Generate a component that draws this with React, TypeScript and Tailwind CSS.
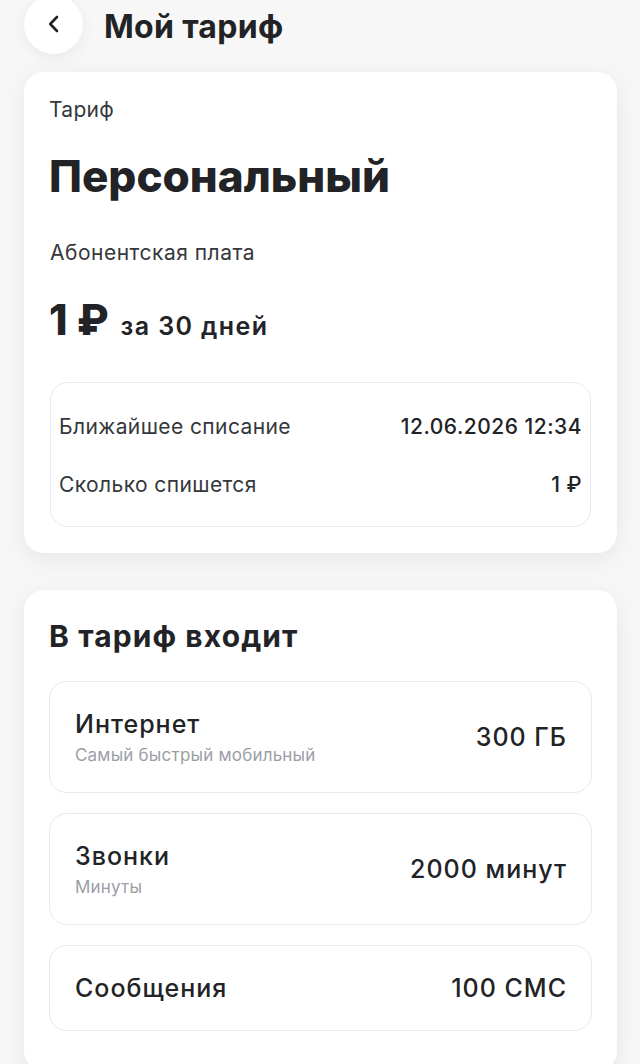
import React from "react";

const font = { fontFamily: "Inter, 'Noto Sans', sans-serif" };

function Item({ title, sub, value }: { title: string; sub?: string; value: string }) {
  return (
    <div
      className={`flex items-center justify-between rounded-[18px] border border-[#e9e9ec] bg-white pl-[25px] pr-[24px] ${
        sub ? "h-[112px]" : "h-[86px]"
      }`}
    >
      <div className="flex flex-col">
        <span className="text-[25px] leading-[30px] font-medium text-[#222326] tracking-[1px]">{title}</span>
        {sub && (
          <span className="mt-[6px] text-[17px] leading-[20px] text-[#9a9ea6] tracking-[0.2px]">{sub}</span>
        )}
      </div>
      <span className="text-[25px] leading-[30px] font-medium text-[#222326] tracking-[1px]">{value}</span>
    </div>
  );
}

export default function App() {
  return (
    <div className="min-h-screen bg-[#f7f7f8] pl-6 pr-[23px] pb-10" style={font}>
      <div className="flex items-center gap-[21px] -mt-[5px] h-[58px]">
        <div className="w-[59px] h-[59px] rounded-full bg-white shadow-[0_4px_16px_rgba(0,0,0,0.06)] flex items-center justify-center">
          <svg width="16" height="20" viewBox="0 0 16 20" fill="none">
            <path d="M11 3L4.2 10L11 17" stroke="#222326" strokeWidth="2.6" strokeLinecap="round" strokeLinejoin="round" />
          </svg>
        </div>
        <h1 className="text-[32px] font-bold leading-[40px] text-[#222326] tracking-[0.3px] mt-[5px]">Мой тариф</h1>
      </div>

      <div className="mt-[19px] rounded-[20px] bg-white shadow-[0_6px_24px_rgba(0,0,0,0.07)] px-[25px] pt-[24px] pb-[26px]">
        <div className="text-[21px] leading-[28px] text-[#35373b] tracking-[0.3px]">Тариф</div>
        <div className="mt-[28px] text-[44px] leading-[48px] font-extrabold text-[#222326] tracking-[0px]">Персональный</div>
        <div className="mt-[39px] text-[21px] leading-[28px] text-[#35373b] pl-[1px] tracking-[0.5px]">Абонентская плата</div>
        <div className="mt-[29px] flex items-baseline gap-[12px] h-[48px]">
          <span className="text-[42px] leading-[48px] font-extrabold text-[#222326]">1 ₽</span>
          <span className="text-[25px] leading-[30px] font-semibold text-[#222326] tracking-[1.4px]">за 30 дней</span>
        </div>
        <div className="mt-[38px] rounded-[18px] border border-[#e9e9ec] px-[8px] pt-[29px] pb-[26px] flex flex-col gap-[28px] ml-[1px] mr-[1px]">
          <div className="flex items-center justify-between h-[30px]">
            <span className="text-[21px] text-[#35373b] tracking-[0.4px]">Ближайшее списание</span>
            <span className="text-[21px] font-medium text-[#222326] tracking-[0.5px]">12.06.2026 12:34</span>
          </div>
          <div className="flex items-center justify-between h-[30px]">
            <span className="text-[21px] text-[#35373b] tracking-[0.4px]">Сколько спишется</span>
            <span className="text-[21px] font-medium text-[#222326] tracking-[0.5px]">1 ₽</span>
          </div>
        </div>
      </div>

      <div className="mt-[37px] rounded-[20px] bg-white shadow-[0_6px_24px_rgba(0,0,0,0.07)] px-[25px] pt-[28px] pb-[40px]">
        <h2 className="text-[30px] leading-[36px] font-bold text-[#222326] tracking-[1.1px]">В тариф входит</h2>
        <div className="mt-[27px] flex flex-col gap-[20px]">
          <Item title="Интернет" sub="Самый быстрый мобильный" value="300 ГБ" />
          <Item title="Звонки" sub="Минуты" value="2000 минут" />
          <Item title="Сообщения" value="100 СМС" />
        </div>
      </div>
    </div>
  );
}
